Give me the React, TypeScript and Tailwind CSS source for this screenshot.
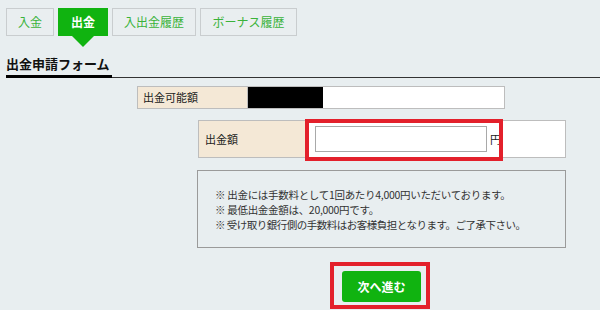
import React from 'react'

const font = { fontFamily: '"Noto Sans CJK JP", "Noto Sans", sans-serif' }

const tabs = [
  { label: '入金', w: 'w-[48px]', active: false },
  { label: '出金', w: 'w-[50px]', active: true },
  { label: '入出金履歴', w: 'w-[84px]', active: false },
  { label: 'ボーナス履歴', w: 'w-[97px]', active: false },
]

export default function App() {
  return (
    <div className="w-[600px] h-[310px] overflow-hidden bg-[#e8eef0] text-[#222]" style={font}>
      {/* tabs */}
      <div className="flex gap-[4px] pl-[6px] pt-[8px]">
        {tabs.map((t) => (
          <div
            key={t.label}
            className={
              t.active
                ? `relative ${t.w} h-[28px] flex items-center justify-center bg-[#10b310] text-white text-[12px] font-bold`
                : `${t.w} h-[28px] flex items-center justify-center border border-[#c9cdcf] bg-[#e9eef0] text-[#3ab33a] text-[12px]`
            }
          >
            {t.label}
            {t.active && (
              <span className="absolute left-1/2 -translate-x-1/2 top-full w-0 h-0 border-l-[11px] border-r-[11px] border-t-[11px] border-l-transparent border-r-transparent border-t-[#10b310]" />
            )}
          </div>
        ))}
      </div>

      {/* heading */}
      <div className="mt-[18px] ml-[6px] border-b border-[#333] flex">
        <div className="border-b-[3px] border-black -mb-px pb-[1px] text-[13px] font-bold leading-[20px] text-[#111] pr-[2px]">
          出金申請フォーム
        </div>
      </div>

      {/* available amount */}
      <div className="mt-[8px] ml-[137px] w-[368px] h-[23px] flex border border-[#bdbdbd]">
        <div className="w-[110px] bg-[#f4e8d6] border-r border-[#bdbdbd] flex items-center pl-[5px] text-[11px]">
          出金可能額
        </div>
        <div className="flex-1 bg-white flex items-stretch">
          <div className="w-[75px] bg-black" />
        </div>
      </div>

      {/* amount input */}
      <div className="mt-[11px] ml-[198px] w-[368px] h-[38px] flex border border-[#bdbdbd]">
        <div className="w-[107px] bg-[#f4e8d6] border-r border-[#bdbdbd] flex items-center pl-[6px] text-[11px]">
          出金額
        </div>
        <div className="relative flex-1 bg-white flex items-center pl-[9px]">
          <div className="w-[172px] h-[26px] border border-[#a9a9a9] bg-white" />
          <span className="ml-[3px] text-[11px]">円</span>
          <div className="absolute left-[-1px] top-[-2px] w-[198px] h-[42px] border-[4px] border-[#e3202b]" />
        </div>
      </div>

      {/* notes */}
      <div className="mt-[12px] ml-[197px] w-[369px] h-[78px] border border-[#9a9a9a] pt-[16px] pl-[17px] text-[10.5px] leading-[15px] text-[#333] whitespace-nowrap">
        <p className="tracking-[-0.3px]">※ 出金には手数料として1回あたり4,000円いただいております。</p>
        <p className="tracking-[-0.3px]">※ 最低出金金額は、20,000円です。</p>
        <p className="tracking-[-0.5px]">※ 受け取り銀行側の手数料はお客様負担となります。ご了承下さい。</p>
      </div>

      {/* button */}
      <div className="mt-[14px] ml-[330px] w-[100px] h-[47px] border-[4px] border-[#e3202b] pt-[5px] pl-[8px]">
        <button className="w-[79px] h-[31px] rounded-[3px] bg-[#10b310] text-white text-[12px] font-bold">
          次へ進む
        </button>
      </div>
    </div>
  )
}
